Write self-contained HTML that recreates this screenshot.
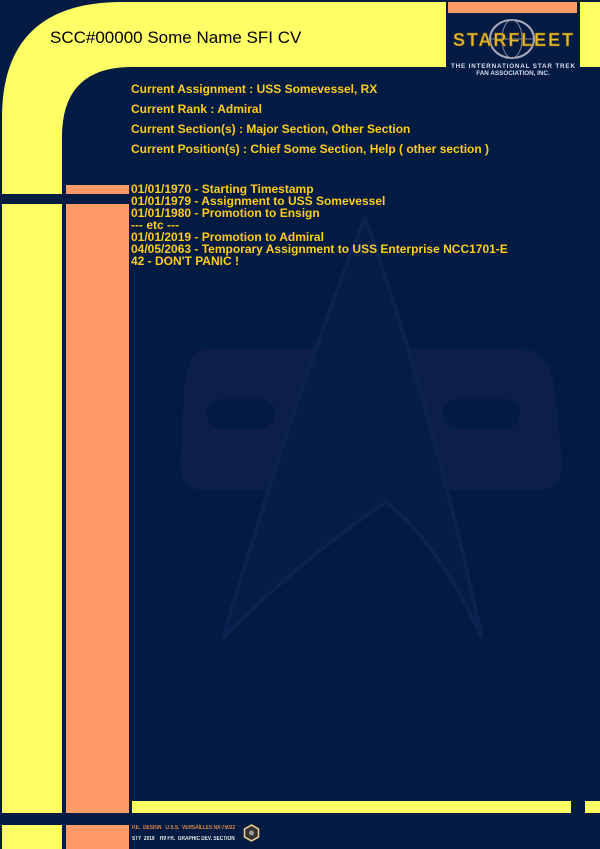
<!DOCTYPE html>
<html><head><meta charset="utf-8"><style>
*{margin:0;padding:0;box-sizing:border-box}
body{width:600px;height:849px;background:#021b42;position:relative;overflow:hidden;font-family:"Liberation Sans",sans-serif}
.a{position:absolute}
.y{background:#ffff66}.o{background:#ff9966}
.t{position:absolute;left:131px;color:#ffcc1a;font-weight:bold;font-size:12px;white-space:nowrap;line-height:12px}
.ft{position:absolute;font-family:"Liberation Sans Narrow","Liberation Sans",sans-serif;font-size:6px;font-weight:bold;white-space:nowrap;transform:scaleX(.8);transform-origin:left}
</style></head><body>
<svg class="a" style="left:0;top:0" width="600" height="849">
<path d="M2,194 L2,118 Q2,2 122,2 L446,2 L446,67 L132,67 Q62,67 62,137 L62,194 Z" fill="#ffff66"/>
<path d="M205,348 Q188,350 184,390 L180,470 Q180,490 205,490 L540,490 Q563,490 562,460 L555,390 Q550,350 520,348 Z" fill="#0b1f48"/>
<rect x="207" y="399" width="68" height="29" rx="14" fill="#021b42"/>
<rect x="443" y="399" width="77" height="29" rx="14" fill="#021b42"/>
<path d="M365,218 Q300,380 223,638 Q300,560 386,502 Q440,545 482,638 Q430,400 365,218 Z" fill="#051d47" stroke="#0c2250" stroke-width="4"/>
</svg>
<div class="a o" style="left:448px;top:2px;width:129px;height:11px"></div>
<div class="a y" style="left:580px;top:2px;width:20px;height:65px"></div>
<div class="a" style="left:50px;top:28px;font-size:17px;color:#000;white-space:nowrap">SCC#00000 Some Name SFI CV</div>
<svg class="a" style="left:448px;top:15px" width="130" height="65">
<ellipse cx="64" cy="24" rx="22" ry="19" fill="none" stroke="#aab" stroke-width="2"/>
<ellipse cx="64" cy="24" rx="10" ry="19" fill="none" stroke="#889" stroke-width="1"/>
<line x1="42" y1="24" x2="86" y2="24" stroke="#889"/>
<text x="65" y="31" text-anchor="middle" font-family="Liberation Sans" font-weight="bold" font-size="18" fill="#e6b830" stroke="#7a5a10" stroke-width=".6" textLength="120">STARFLEET</text>
<text x="65" y="53" text-anchor="middle" font-family="Liberation Sans" font-weight="bold" font-size="6.3" fill="#dde" textLength="124">THE INTERNATIONAL STAR TREK</text>
<text x="65" y="60" text-anchor="middle" font-family="Liberation Sans" font-weight="bold" font-size="6.3" fill="#dde">FAN ASSOCIATION, INC.</text>
</svg>
<div class="t" style="top:83px">Current Assignment : USS Somevessel, RX</div>
<div class="t" style="top:103px">Current Rank : Admiral</div>
<div class="t" style="top:123px">Current Section(s) : Major Section, Other Section</div>
<div class="t" style="top:143px">Current Position(s) : Chief Some Section, Help ( other section )</div>
<div class="t" style="top:183px">01/01/1970 - Starting Timestamp</div>
<div class="t" style="top:195px">01/01/1979 - Assignment to USS Somevessel</div>
<div class="t" style="top:207px">01/01/1980 - Promotion to Ensign</div>
<div class="t" style="top:219px">--- etc ---</div>
<div class="t" style="top:231px">01/01/2019 - Promotion to Admiral</div>
<div class="t" style="top:243px">04/05/2063 - Temporary Assignment to USS Enterprise NCC1701-E</div>
<div class="t" style="top:255px">42 - DON'T PANIC !</div>
<div class="a o" style="left:66px;top:185px;width:63px;height:9px"></div>
<div class="a y" style="left:2px;top:204px;width:60px;height:609px"></div>
<div class="a o" style="left:66px;top:204px;width:63px;height:609px"></div>
<div class="a y" style="left:2px;top:825px;width:60px;height:24px"></div>
<div class="a o" style="left:66px;top:825px;width:63px;height:24px"></div>
<div class="a y" style="left:132px;top:801px;width:439px;height:12px"></div>
<div class="a y" style="left:585px;top:801px;width:15px;height:12px"></div>
<div class="ft" style="left:132px;top:825px;color:#e08a50">P.E. &nbsp;DESIGN &nbsp;&nbsp;U.S.S. &nbsp;VERSAILLES NX-75022</div>
<div class="ft" style="left:132px;top:836px;color:#e8e8e8">STY &nbsp;2019 &nbsp;&nbsp;&nbsp;R9 FR. &nbsp;GRAPHIC DEV. SECTION</div>
<svg class="a" style="left:243px;top:824px" width="17" height="18"><polygon points="8.5,1 15.5,5 15.5,13 8.5,17 1.5,13 1.5,5" fill="#333" stroke="#e8c890" stroke-width="1.6"/><circle cx="8.5" cy="9" r="2.5" fill="#999"/></svg>
</body></html>
